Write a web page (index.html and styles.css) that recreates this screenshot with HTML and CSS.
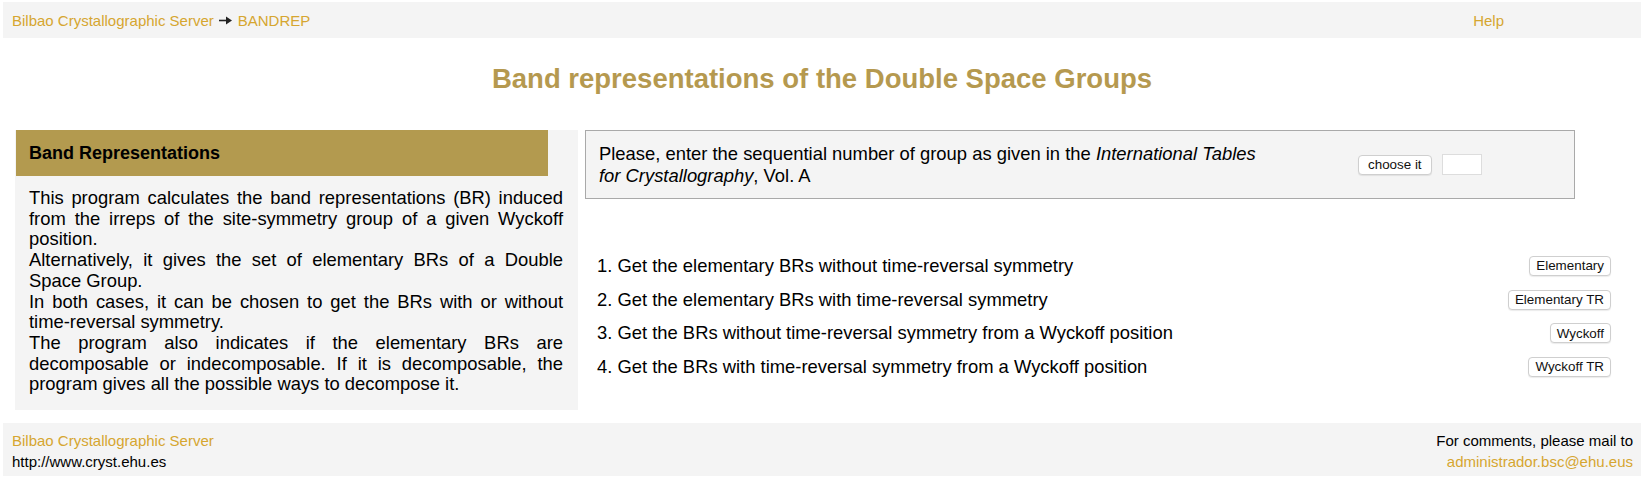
FILE: index.html
```html
<!DOCTYPE html>
<html>
<head>
    <title>BANDREP</title>
    <link rel="stylesheet" href="styles.css">
</head>
<body>
    <div class="topbar">
        <div class="crumbs">
            <a href="#">Bilbao Crystallographic Server</a>
            <svg class="arrow" width="14" height="9" viewBox="0 0 14 9"><path d="M0 4.5h8" stroke="#222" stroke-width="1.6"/><path d="M7 0.5l6 4-6 4z" fill="#222"/></svg>
            <a href="#">BANDREP</a>
        </div>
        <a class="help" href="#">Help</a>
    </div>

    <h1>Band representations of the Double Space Groups</h1>

    <div class="content">
        <div class="info-panel">
            <div class="info-header">Band Representations</div>
            <div class="info-text">
                This program calculates the band representations (BR) induced from the irreps of the site-symmetry group of a given Wyckoff position.<br>
                Alternatively, it gives the set of elementary BRs of a Double Space Group.<br>
                In both cases, it can be chosen to get the BRs with or without <span class="nowrap">time-reversal</span> symmetry.<br>
                The program also indicates if the elementary BRs are decomposable or indecomposable. If it is decomposable, the program gives all the possible ways to decompose it.
            </div>
        </div>

        <div class="tools">
            <form class="group-box">
                <div class="group-text">Please, enter the sequential number of group as given in the <i>International Tables for Crystallography</i>, Vol. A</div>
                <button type="button" class="btn">choose it</button>
                <input type="text" class="group-input">
            </form>

            <div class="options">
                <div class="option-row">
                    <span>1. Get the elementary BRs without time-reversal symmetry</span>
                    <button type="button" class="btn">Elementary</button>
                </div>
                <div class="option-row">
                    <span>2. Get the elementary BRs with time-reversal symmetry</span>
                    <button type="button" class="btn">Elementary TR</button>
                </div>
                <div class="option-row">
                    <span>3. Get the BRs without time-reversal symmetry from a Wyckoff position</span>
                    <button type="button" class="btn">Wyckoff</button>
                </div>
                <div class="option-row">
                    <span>4. Get the BRs with time-reversal symmetry from a Wyckoff position</span>
                    <button type="button" class="btn">Wyckoff TR</button>
                </div>
            </div>
        </div>
    </div>

    <div class="footer">
        <div>
            <a href="#">Bilbao Crystallographic Server</a><br>
            http://www.cryst.ehu.es
        </div>
        <div class="footer-right">
            For comments, please mail to<br>
            <a href="#">administrador.bsc@ehu.eus</a>
        </div>
    </div>
</body>
</html>
```

FILE: styles.css
```css
body {
    font-family: 'Liberation Sans', Arial, Helvetica, sans-serif;
    color: #000000;
    background-color: #ffffff;
    margin: 2px 9px 0 3px;
}

a {
    color: #d6a630;
    text-decoration: none;
}

.nowrap {
    white-space: nowrap;
}

.topbar {
    display: flex;
    align-items: center;
    justify-content: space-between;
    height: 36px;
    padding: 0 137px 0 9px;
    background-color: #f4f4f4;
    font-size: 15px;
}

.crumbs {
    display: flex;
    align-items: center;
    gap: 4px;
}

.arrow {
    margin: 1px 1px 0 1px;
}

h1 {
    text-align: center;
    color: #b5994f;
    font-size: 27.5px;
    line-height: 32px;
    margin: 25px 0 35px 0;
}

.content {
    display: flex;
    gap: 7px;
    margin-left: 12px;
    margin-right: 30px;
}

.info-panel {
    width: 563px;
    flex-shrink: 0;
    background-color: #f4f4f4;
}

.info-header {
    width: 532px;
    height: 46px;
    margin-left: 1px;
    padding-left: 13px;
    box-sizing: border-box;
    display: flex;
    align-items: center;
    background-color: #b39a4f;
    font-size: 18px;
    font-weight: bold;
}

.info-text {
    font-size: 18.4px;
    line-height: 20.7px;
    text-align: justify;
    padding: 12px 15px 15px 14px;
}

.tools {
    flex: 1;
}

.group-box {
    display: flex;
    align-items: center;
    height: 69px;
    box-sizing: border-box;
    margin: 0 36px 0 0;
    padding-left: 13px;
    border: 1px solid #a9a9a9;
    background-color: #f4f4f4;
    font-size: 18.4px;
    line-height: 21.5px;
}

.group-text {
    width: 665px;
}

.group-box .btn {
    margin-left: 94px;
}

.group-input {
    width: 40px;
    height: 21px;
    box-sizing: border-box;
    margin-left: 10px;
    border: 1px solid #dddddd;
    background-color: #ffffff;
    padding: 0;
}

.btn {
    font-family: 'Liberation Sans', Arial, Helvetica, sans-serif;
    font-size: 13.4px;
    height: 20px;
    padding: 0 9px;
    color: #111111;
    background-color: #ffffff;
    border: 1px solid #cfcfcf;
    border-radius: 4px;
    box-shadow: 0 1px 1px rgba(0, 0, 0, 0.08);
}

.options {
    margin-top: 50px;
}

.option-row {
    display: flex;
    align-items: center;
    justify-content: space-between;
    height: 33.7px;
    padding-left: 12px;
    font-size: 18.4px;
}

.option-row .btn {
    padding: 0 6px;
}

.footer {
    display: flex;
    justify-content: space-between;
    margin-top: 13px;
    padding: 7px 8px 4px 9px;
    background-color: #f4f4f4;
    font-size: 15px;
    line-height: 21px;
}

.footer-right {
    text-align: right;
}
```
